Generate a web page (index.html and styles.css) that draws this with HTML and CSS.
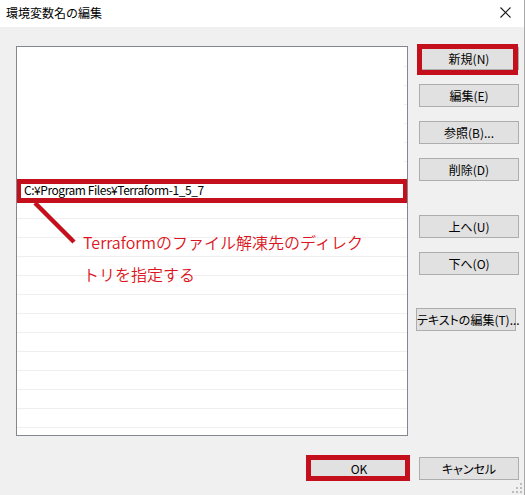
FILE: index.html
```html
<!DOCTYPE html>
<html lang="ja">
<head>
<meta charset="utf-8">
<title>環境変数名の編集</title>
<link rel="stylesheet" href="styles.css">
</head>
<body>
<div class="window">
  <div class="titlebar">
    <span class="title">環境変数名の編集</span>
    <svg class="close" width="11" height="11" viewBox="0 0 11 11"><path d="M0.5 0.5 L10.5 10.5 M10.5 0.5 L0.5 10.5" stroke="#1a1a1a" stroke-width="1.1" fill="none"/></svg>
  </div>
  <div class="main">
    <div class="list">
      <div class="row blank"></div>
      <div class="row blank"></div>
      <div class="row blank"></div>
      <div class="row blank"></div>
      <div class="row blank"></div>
      <div class="row blank"></div>
      <div class="row blank"></div>
      <div class="row path">C:¥Program Files¥Terraform-1_5_7</div>
      <div class="row"></div>
      <div class="row"></div>
      <div class="row"></div>
      <div class="row"></div>
      <div class="row"></div>
      <div class="row"></div>
      <div class="row"></div>
      <div class="row"></div>
      <div class="row"></div>
      <div class="row"></div>
      <div class="row"></div>
      <div class="row"></div>
      <div class="row"></div>
      <div class="hl-row"></div>
      <svg class="pointer" width="60" height="60" viewBox="0 0 60 60"><line x1="2" y1="1" x2="41" y2="40" stroke="#c4101c" stroke-width="4.5"/></svg>
      <div class="note">Terraformのファイル解凍先のディレク<br>トリを指定する</div>
    </div>
    <div class="side">
      <button class="btn first">新規(N)<span class="hl-new"></span></button>
      <button class="btn">編集(E)</button>
      <button class="btn">参照(B)...</button>
      <button class="btn">削除(D)</button>
      <button class="btn up">上へ(U)</button>
      <button class="btn">下へ(O)</button>
      <button class="btn text">テキストの編集(T)...</button>
    </div>
  </div>
  <div class="footer">
    <button class="btn ok">OK<span class="hl-ok"></span></button>
    <button class="btn">キャンセル</button>
  </div>
  <svg class="grip" width="12" height="12" viewBox="0 0 12 12">
    <rect x="9" y="1" width="2" height="2" fill="#bdbdbd"/>
    <rect x="5" y="5" width="2" height="2" fill="#bdbdbd"/>
    <rect x="9" y="5" width="2" height="2" fill="#bdbdbd"/>
    <rect x="1" y="9" width="2" height="2" fill="#bdbdbd"/>
    <rect x="5" y="9" width="2" height="2" fill="#bdbdbd"/>
    <rect x="9" y="9" width="2" height="2" fill="#bdbdbd"/>
  </svg>
</div>
</body>
</html>
```

FILE: styles.css
```css
html, body {
  margin: 0;
  padding: 0;
  background: #f0f0f0;
}
body {
  width: 525px;
  height: 495px;
  overflow: hidden;
  font-family: "Noto Sans CJK JP", "Noto Sans", sans-serif;
  font-size: 12px;
  color: #000;
}
.window {
  position: relative;
  width: 524px;
  height: 495px;
  border-right: 1px solid #a9a9a9;
  background: #f0f0f0;
  display: flex;
  flex-direction: column;
}
.titlebar {
  height: 27px;
  background: #fff;
  display: flex;
  align-items: center;
  justify-content: space-between;
  padding: 0 13px 0 6px;
  box-sizing: border-box;
}
.title {
  font-size: 12px;
  line-height: 14px;
  margin-top: -2px;
  color: #000;
}
.close {
  display: block;
  margin-top: -3px;
}
.main {
  display: flex;
  padding: 19px 0 0 16px;
}
.list {
  position: relative;
  width: 392px;
  height: 390px;
  box-sizing: border-box;
  border: 1px solid #828790;
  background: #fff;
  padding-top: 1px;
  overflow: hidden;
}
.row {
  height: 19px;
  line-height: 18px;
  padding-left: 7px;
  background: linear-gradient(#efefef, #efefef) left bottom / 100% 1px no-repeat;
  font-size: 12px;
  white-space: nowrap;
}
.row.path {
  letter-spacing: -0.45px;
}
.row.blank {
  background: linear-gradient(#efefef, #efefef) right bottom / 3px 1px no-repeat;
}
.hl-row {
  position: absolute;
  left: -1px;
  top: 132px;
  width: 392px;
  height: 24px;
  box-sizing: border-box;
  border: 5px solid #c4101c;
}
.pointer {
  position: absolute;
  left: 16px;
  top: 155px;
}
.note {
  position: absolute;
  left: 66px;
  top: 179px;
  font-size: 16px;
  line-height: 32px;
  font-weight: 350;
  color: #dc1420;
  white-space: nowrap;
}
.side {
  display: flex;
  flex-direction: column;
  margin-left: 11px;
  padding-top: 1px;
  gap: 14px;
}
.btn {
  position: relative;
  width: 100px;
  height: 23px;
  box-sizing: border-box;
  border: 1px solid #adadad;
  background: #e1e1e1;
  font-family: "Noto Sans CJK JP", "Noto Sans", sans-serif;
  font-size: 12px;
  font-feature-settings: "palt";
  color: #000;
  padding: 0;
  margin: 0;
  line-height: 20px;
  text-align: center;
  white-space: nowrap;
}
.btn.up {
  margin-top: 20px;
}
.btn.text {
  margin-top: 19px;
  margin-left: -3px;
}
.hl-new {
  position: absolute;
  left: -3px;
  top: -4px;
  width: 101px;
  height: 31px;
  box-sizing: border-box;
  border: 5px solid #c4101c;
}
.footer {
  display: flex;
  gap: 10px;
  padding: 21px 0 0 309px;
}
.hl-ok {
  position: absolute;
  left: -4px;
  top: -3px;
  width: 104px;
  height: 26px;
  box-sizing: border-box;
  border: 5px solid #c4101c;
}
.grip {
  position: absolute;
  right: 1px;
  bottom: 1px;
}
```
